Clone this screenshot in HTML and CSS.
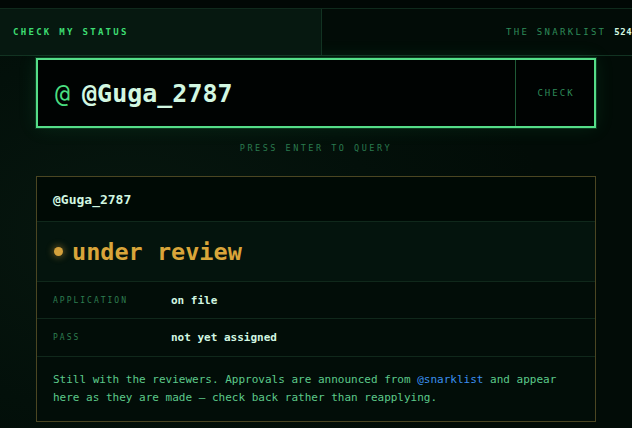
FILE: index.html
```html
<!DOCTYPE html>
<html>
<head>
<meta charset="utf-8">
<link rel="stylesheet" href="styles.css">
</head>
<body>
<div class="strip"></div>
<header class="topbar">
  <div class="tab">CHECK MY STATUS</div>
  <div class="brand">THE SNARKLIST<span class="count">524 ON FILE</span></div>
</header>
<main class="page">
  <div class="query">
    <div class="field"><span class="at">@</span><span class="handle">@Guga_2787</span></div>
    <div class="check">CHECK</div>
  </div>
  <div class="hint">PRESS ENTER TO QUERY</div>
  <section class="card">
    <div class="card-head">@Guga_2787</div>
    <div class="status"><span class="dot"></span><span class="status-text">under review</span></div>
    <div class="row"><span class="label">APPLICATION</span><span class="value">on file</span></div>
    <div class="row"><span class="label">PASS</span><span class="value">not yet assigned</span></div>
    <p class="note">Still with the reviewers. Approvals are announced from <span class="link">@snarklist</span> and appear here as they are made — check back rather than reapplying.</p>
  </section>
</main>
</body>
</html>
```
FILE: styles.css
```css
* { box-sizing: border-box; }
html, body { margin: 0; padding: 0; }
body {
  width: 632px;
  height: 428px;
  overflow: hidden;
  background: radial-gradient(ellipse 420px 300px at 20% 55%, #07170f 0%, #03100a 60%, #020c07 100%);
  font-family: "DejaVu Sans Mono", "Liberation Mono", monospace;
  color: #d2f7e1;
}
.strip { height: 8px; background: #010805; }
.topbar {
  display: flex;
  height: 48px;
  border-top: 1px solid #0f2a1c;
  border-bottom: 1px solid #123322;
  background: #020c07;
  white-space: nowrap;
  overflow: hidden;
}
.tab {
  width: 322px;
  flex: none;
  background: #061810;
  border-right: 1px solid #123322;
  display: flex;
  align-items: center;
  padding-left: 13px;
  font-size: 9px;
  letter-spacing: 2.3px;
  color: #3ddc72;
  font-weight: bold;
}
.brand {
  flex: none;
  display: flex;
  align-items: center;
  padding-left: 184px;
  font-size: 9px;
  letter-spacing: 2.3px;
  color: #2e8a58;
}
.count { color: #d2f7e1; margin-left: 8px; font-weight: bold; letter-spacing: 0.5px; }
.page { padding: 2px 36px 0 36px; }
.query {
  display: flex;
  height: 70px;
  border: 2px solid #55dd88;
  box-shadow: 0 0 0 1px #0b3a20, 0 0 18px rgba(40, 200, 110, 0.12);
  background: #000302;
}
.field {
  flex: 1;
  display: flex;
  align-items: center;
  padding-left: 17px;
  font-size: 25px;
  font-weight: bold;
}
.at { color: #4ade80; font-weight: normal; margin-right: 12px; }
.handle { color: #d2f7e1; }
.check {
  width: 79px;
  flex: none;
  border-left: 1px solid #1f5a36;
  display: flex;
  align-items: center;
  justify-content: center;
  font-size: 9px;
  letter-spacing: 2px;
  color: #2e8a58;
  padding-left: 2px;
}
.hint {
  text-align: center;
  font-size: 8.5px;
  letter-spacing: 2.5px;
  color: #2a7a4e;
  margin-top: 14px;
  height: 12px;
  line-height: 12px;
}
.card {
  margin-top: 22px;
  border: 1px solid #4b4622;
  background: #020d08;
}
.card-head {
  height: 45px;
  display: flex;
  align-items: center;
  padding-left: 16px;
  background: #000a05;
  border-bottom: 1px solid #10281b;
  font-size: 13px;
  font-weight: bold;
  color: #d2f7e1;
}
.status {
  height: 60px;
  display: flex;
  align-items: center;
  padding-left: 16px;
  background: #04140d;
  border-bottom: 1px solid #10281b;
}
.dot {
  width: 9px;
  height: 9px;
  border-radius: 50%;
  background: #d4a13c;
  box-shadow: 0 0 6px 2px rgba(212, 161, 60, 0.35);
  margin-right: 9px;
  margin-left: 1px;
}
.status-text {
  font-size: 23.5px;
  color: #d9a53a;
  font-weight: bold;
}
.row {
  height: 37px;
  display: flex;
  align-items: center;
  padding-left: 16px;
  border-bottom: 1px solid #10281b;
}
.row + .row { height: 38px; }
.label {
  width: 118px;
  flex: none;
  font-size: 8px;
  letter-spacing: 2px;
  color: #2e7d50;
}
.value { font-size: 11px; color: #d2f7e1; font-weight: bold; }
.note {
  margin: 0;
  padding: 14px 16px;
  font-size: 11px;
  line-height: 18px;
  color: #5cc98a;
}
.link { color: #3b8ff0; }
```
